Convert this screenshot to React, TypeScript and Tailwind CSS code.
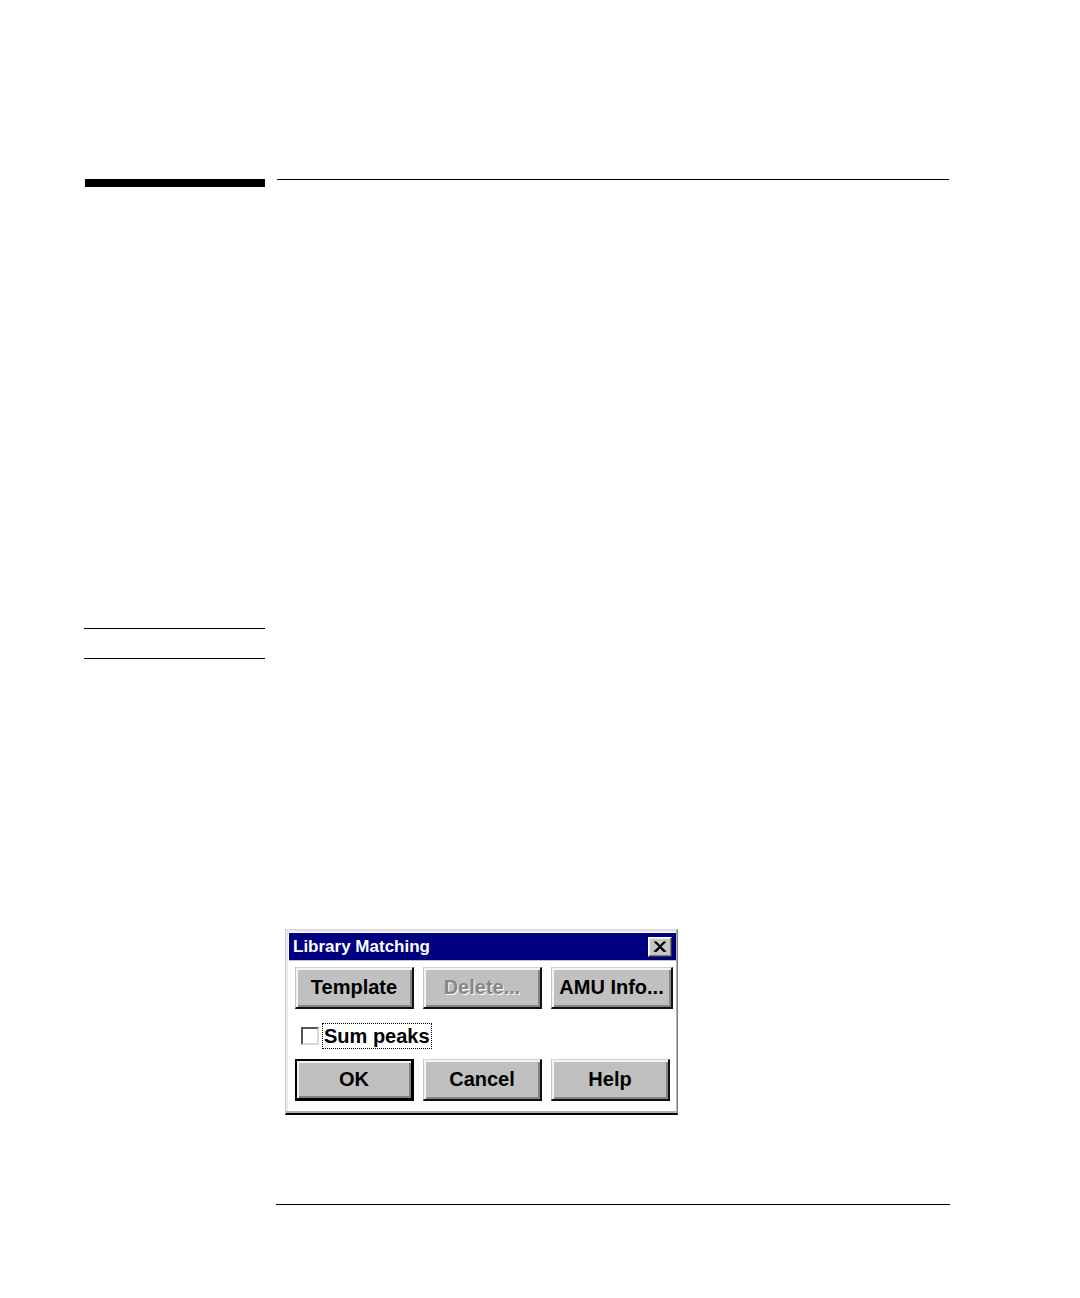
import type { ReactNode } from "react";

type DialogButtonProps = {
  children: ReactNode;
  isDefault?: boolean;
  disabled?: boolean;
  wide?: boolean;
};

function DialogButton({ children, isDefault, disabled, wide }: DialogButtonProps) {
  const frame = isDefault
    ? "border-2 border-r-3 border-b-3 border-black shadow-[inset_2px_2px_0_#f4f4f4,inset_-2px_-2px_0_#808080]"
    : "border border-t-[#d0d0d0] border-l-[#c4c4c4] border-r-2 border-b-2 border-r-[#111111] border-b-[#111111] shadow-[inset_2px_2px_0_#f4f4f4,inset_-2px_-2px_0_#858585]";
  return (
    <button
      type="button"
      disabled={disabled}
      className={`flex h-[42px] shrink-0 items-center justify-center bg-[#c0c0c0] pb-0.5 text-xl leading-6 font-bold whitespace-nowrap ${frame} ${
        wide ? "w-[122px]" : "w-[119px]"
      } ${disabled ? "text-[#868686] [text-shadow:1px_1px_0_#ffffff]" : "text-black"}`}
    >
      {children}
    </button>
  );
}

function LibraryMatchingDialog() {
  return (
    <section
      role="dialog"
      aria-labelledby="dialog-title"
      className="w-[393px] border border-t-[#d4d4d4] border-l-[#d0d0d0] border-r-[#808080] border-b-2 border-b-black shadow-[inset_-1px_-2px_0_#b0b0b0,inset_2px_2px_0_#e9e9e9]"
    >
      <div className="border-3 border-r border-b-2 border-transparent">
        <header className="flex h-7 items-center justify-between border-b border-[#c0c0c0] bg-[#000080] pr-1 pl-1">
          <h1 id="dialog-title" className="text-[17px] leading-6 font-bold text-white">
            Library Matching
          </h1>
          <button
            type="button"
            aria-label="Close"
            className="flex h-5 w-6 items-center justify-center border border-t-white border-l-white border-r-[#303030] border-b-[#303030] bg-[#c6c6c6] shadow-[inset_-1px_-1px_0_#808080,inset_1px_1px_0_#eeeeee]"
          >
            <svg width="14" height="12" viewBox="0 0 14 12" aria-hidden="true">
              <path d="M1 0.5H3.5L7 4L10.5 0.5H13V1.2L8.4 5.6L13 10.1V11H10.6L7 7.4L3.4 11H1V10.1L5.6 5.6L1 1.2Z" fill="#000000" />
            </svg>
          </button>
        </header>
        <div className="pt-1.5 pb-2.5 pl-1.5">
          <div className="flex gap-[9px]">
            <DialogButton>Template</DialogButton>
            <DialogButton disabled>Delete...</DialogButton>
            <DialogButton wide>AMU Info...</DialogButton>
          </div>
          <div className="flex items-center gap-[3px] pt-3.5 pb-2.5 pl-1.5">
            <input
              id="sum-peaks"
              type="checkbox"
              className="size-[18px] appearance-none border-2 border-t-[#555555] border-l-[#555555] border-r-[#d8d8d8] border-b-[#d8d8d8] bg-white checked:bg-black"
            />
            <label
              htmlFor="sum-peaks"
              className="border border-dotted border-black px-px text-xl leading-6 font-bold text-black"
            >
              Sum peaks
            </label>
          </div>
          <div className="flex gap-[9px]">
            <DialogButton isDefault>OK</DialogButton>
            <DialogButton>Cancel</DialogButton>
            <DialogButton>Help</DialogButton>
          </div>
        </div>
      </div>
    </section>
  );
}

export default function App() {
  return (
    <div className="min-h-screen bg-white font-['Liberation_Sans',Arial,sans-serif]">
      <main className="grid grid-cols-[181px_1fr] gap-x-[11px] pt-[179px] pr-[130px] pb-[93px] pl-[84px]">
        <aside>
          <div className="ml-px h-2 bg-black" />
          <div className="mt-[441px] h-[31px] border-y border-black" />
        </aside>
        <article className="border-b border-black">
          <div className="mx-px border-t border-black" />
          <div className="pt-[749px] pb-[89px] pl-[9px]">
            <LibraryMatchingDialog />
          </div>
        </article>
      </main>
    </div>
  );
}
